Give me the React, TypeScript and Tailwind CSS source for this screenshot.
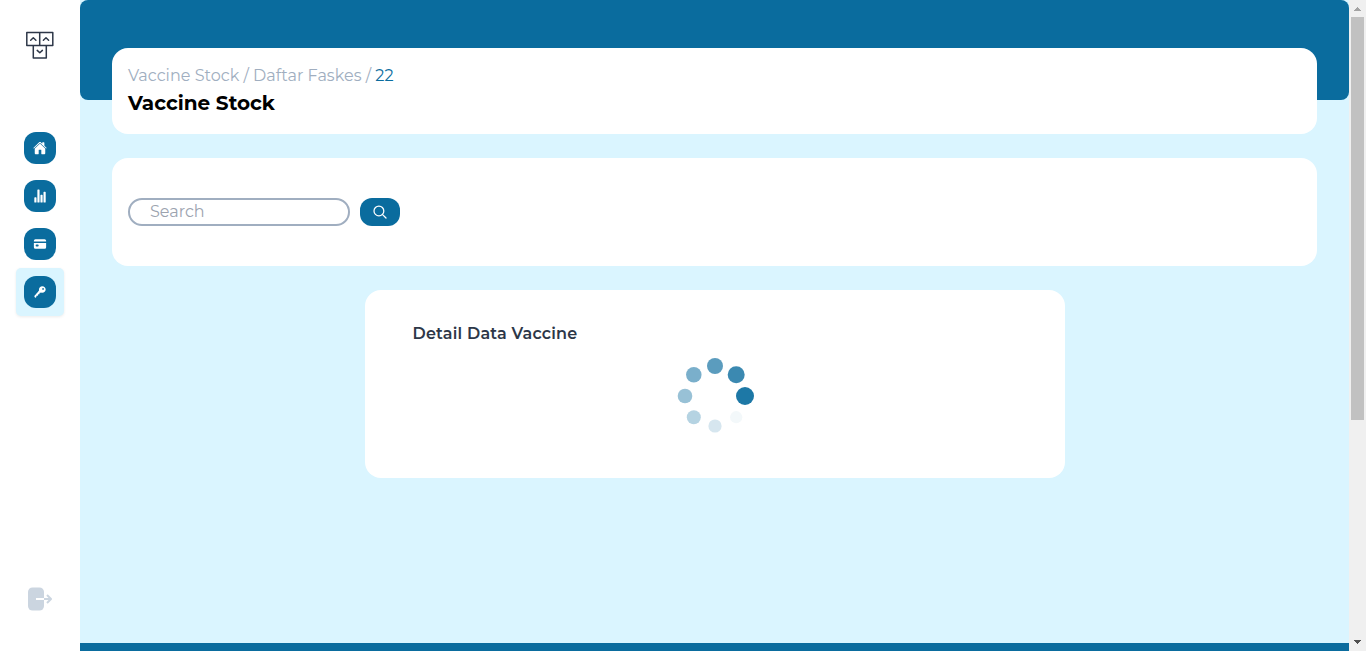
import type { ReactNode } from "react";
import { IoCard, IoHome, IoKey, IoSearchOutline, IoStatsChart } from "react-icons/io5";

function Logo() {
  return (
    <svg width="28" height="28" viewBox="0 0 28 28" fill="none" stroke="#2d3748" strokeWidth="1.5" strokeLinejoin="round" strokeLinecap="round">
      <path d="M.8 1.600h26v12.900H.8zM13.700 1.600v12.900M7.300 14.500h13v12.500h-13z" />
      <path d="m4.700 9.200 2.600-2.400 2.600 2.400M17.400 9.200l2.600-2.400 2.600 2.400M11.200 19.400l2.600 2.400 2.600-2.400" />
    </svg>
  );
}

function NavButton({ children, active = false }: { children: ReactNode; active?: boolean }) {
  return (
    <button
      className={
        active
          ? "flex size-12 items-center justify-center rounded-[5px] bg-[#daf5ff] shadow-[0_1px_3px_rgba(0,0,0,0.08)]"
          : "flex size-12 items-center justify-center"
      }
    >
      <span className="flex size-8 items-center justify-center rounded-xl bg-[#0a6c9e] text-white">{children}</span>
    </button>
  );
}

const dots = [
  { cx: 85, cy: 50, r: 9, o: 0.92 },
  { cx: 76.2, cy: 28.7, r: 8.5, o: 0.8 },
  { cx: 55, cy: 20, r: 8, o: 0.67 },
  { cx: 33.8, cy: 28.7, r: 7.75, o: 0.54 },
  { cx: 25, cy: 50, r: 7.3, o: 0.42 },
  { cx: 33.8, cy: 71.2, r: 7, o: 0.3 },
  { cx: 55, cy: 80, r: 6.6, o: 0.17 },
  { cx: 76.2, cy: 71.2, r: 6.1, o: 0.05 },
];

function Spinner() {
  return (
    <svg width="110" height="100" viewBox="0 0 110 100" fill="#0a6c9e">
      {dots.map((d) => (
        <circle key={d.o} cx={d.cx} cy={d.cy} r={d.r} fillOpacity={d.o} />
      ))}
    </svg>
  );
}

function Scrollbar() {
  return (
    <div className="flex w-[17px] flex-col items-center bg-[#f0f0f0]">
      <svg width="17" height="17" viewBox="0 0 17 17" fill="#a3a3a3" shapeRendering="crispEdges">
        <path d="M8 7h1v1h1v1h1v1h1v1H5v-1h1V9h1V8h1z" />
      </svg>
      <div className="h-[403px] w-[13px] bg-[#c1c1c1]" />
      <svg className="mt-auto" width="17" height="17" viewBox="0 0 17 17" fill="#505050" shapeRendering="crispEdges">
        <path d="M5 6h7v1h-1v1h-1v1H9v1H8V9H7V8H6V7H5z" />
      </svg>
    </div>
  );
}

export default function App() {
  return (
    <div className="flex h-[651px] overflow-hidden bg-white font-[Montserrat,Inter,sans-serif] text-base">
      <aside className="flex w-20 shrink-0 flex-col items-center pt-[31px] pb-10">
        <Logo />
        <nav className="mt-[65px] flex flex-col">
          <NavButton><IoHome size={14} /></NavButton>
          <NavButton><IoStatsChart size={14} /></NavButton>
          <NavButton><IoCard size={14} /></NavButton>
          <NavButton active><IoKey size={14} /></NavButton>
        </nav>
        <button className="mt-auto text-[#cbd5e0]">
          <svg width="24" height="24" viewBox="0 0 24 24" fill="none">
            <rect y="0.500" width="16" height="23" rx="4.500" fill="currentColor" />
            <path d="M8 12h8" stroke="white" strokeWidth="2" />
            <path d="M16 12h7M19 8l4 4-4 4" stroke="currentColor" strokeWidth="2" strokeLinejoin="round" />
          </svg>
        </button>
      </aside>

      <div className="flex min-w-0 grow flex-col bg-[#daf5ff]">
        <div className="h-[100px] shrink-0 rounded-lg bg-[#0a6c9e]" />
        <main className="-mt-[52px] flex grow flex-col gap-6 px-8">
          <header className="flex h-[86px] flex-col rounded-2xl bg-white px-4 pt-4">
            <p className="h-6 text-base leading-6 font-normal tracking-[0.0015em] whitespace-nowrap text-[#a0aec0]">
              Vaccine Stock / Daftar Faskes / <span className="text-[#0a6c9e]">22</span>
            </p>
            <h1 className="text-xl leading-[30px] font-bold text-black">Vaccine Stock</h1>
          </header>
          <section className="flex h-[108px] items-center gap-2.5 rounded-2xl bg-white px-4">
            <input
              className="h-7 w-[222px] rounded-[14px] border-2 border-[#a0aec0] pb-px pl-5 text-base font-normal outline-none placeholder:text-[#9ca3af]"
              placeholder="Search"
            />
            <button className="flex h-7 w-10 items-center justify-center rounded-xl bg-[#0a6c9e] text-white">
              <IoSearchOutline size={16} className="[&_path]:[stroke-width:40px]" />
            </button>
          </section>
          <section className="flex h-[188px] w-[700px] flex-col self-center rounded-2xl bg-white px-12 pt-8">
            <h2 className="h-6 text-base leading-6 font-semibold tracking-[0.013em] text-[#2d3748]">Detail Data Vaccine</h2>
            <div className="flex justify-center">
              <Spinner />
            </div>
          </section>
        </main>
        <div className="h-2 shrink-0 bg-[#0a6c9e]" />
      </div>
      <Scrollbar />
    </div>
  );
}
